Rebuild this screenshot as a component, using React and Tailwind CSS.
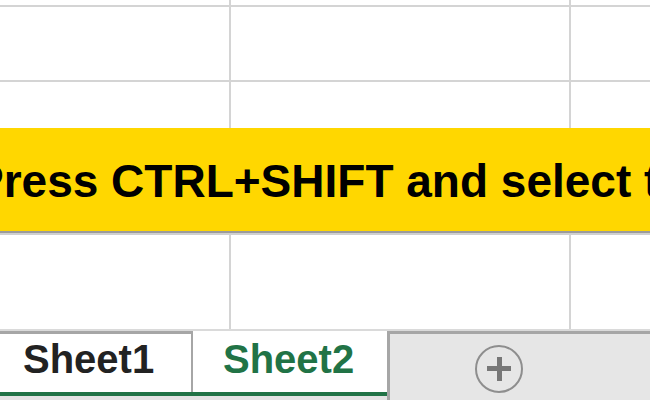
import React from "react";

export default function App() {
  const font = { fontFamily: '"Liberation Sans", Arial, sans-serif' };
  return (
    <div
      className="relative w-[650px] h-[400px] overflow-hidden bg-white"
      style={font}
    >
      {/* Sheet grid */}
      <div className="grid grid-cols-[229px_338px_1fr] grid-rows-[5px_73px_73px_73px_97px] gap-[2px] bg-[#d4d4d4] h-[329px]">
        {Array.from({ length: 15 }).map((_, i) => (
          <div key={i} className="bg-white" />
        ))}
      </div>

      {/* Yellow callout band over the cells */}
      <div className="absolute left-0 right-0 top-[128px] h-[103px] bg-[#ffd700] shadow-[0_2px_0_#9b9b9b,0_4px_0_#d0d0d0] overflow-hidden">
        <div className="ml-[-27px] pt-[30px] whitespace-nowrap text-[46px] leading-[46px] font-bold text-black">
          Press CTRL+SHIFT and select the sheets
        </div>
      </div>

      {/* Tab bar */}
      <div className="h-[2px] bg-[#dadada]" />
      <div className="flex h-[69px]">
        <div className="flex w-[387px] flex-col">
          <div className="flex h-[61px]">
            <div className="w-[193px] border-t-[3px] border-r-[2px] border-[#a6a6a6] pl-[23px] pt-[5px]">
              <span className="text-[40px] leading-[40px] font-bold text-[#222222]">
                Sheet1
              </span>
            </div>
            <div className="flex-1 pl-[30px] pt-[8px]">
              <span className="text-[40px] leading-[40px] font-bold text-[#217346]">
                Sheet2
              </span>
            </div>
          </div>
          <div className="h-[4px] bg-[#217346]" />
          <div className="h-[4px] bg-[#e3e3e3]" />
        </div>
        <div className="flex-1 border-l-[3px] border-t-[3px] border-[#a6a6a6] bg-[#e6e6e6] pl-[85px] pt-[11px]">
          <div className="relative h-[48px] w-[48px] rounded-full border-[2px] border-[#8e8e8e]">
            <div className="absolute left-[10px] top-[19px] h-[5px] w-[24px] bg-[#777777]" />
            <div className="absolute left-[19.5px] top-[9.5px] h-[24px] w-[5px] bg-[#777777]" />
          </div>
        </div>
      </div>
    </div>
  );
}
